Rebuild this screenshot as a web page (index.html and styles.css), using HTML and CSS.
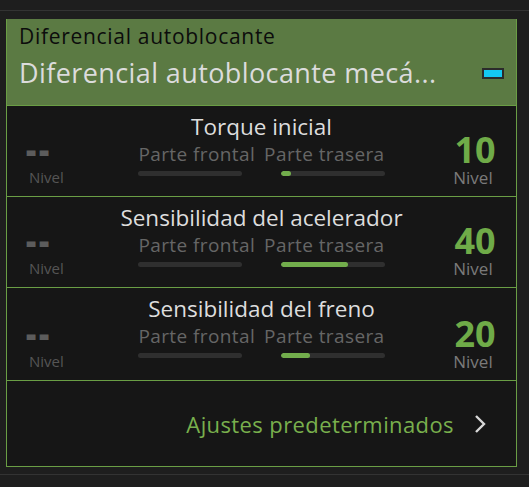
FILE: index.html
```html
<!DOCTYPE html>
<html lang="es">
<head>
<meta charset="utf-8">
<link rel="stylesheet" href="styles.css">
</head>
<body>
<div class="screen">
  <div class="topbar"></div>
  <div class="panel">
    <div class="header">
      <div class="h-small">Diferencial autoblocante</div>
      <div class="h-big">
        <span class="h-title">Diferencial autoblocante mecá...</span>
        <span class="indicator"></span>
      </div>
    </div>

    <div class="row">
      <div class="side left">
        <div class="dash">--</div>
        <div class="lvl-s">Nivel</div>
      </div>
      <div class="center">
        <div class="title">Torque inicial</div>
        <div class="parts">
          <div class="part">
            <div class="plabel">Parte frontal</div>
            <div class="bar"></div>
          </div>
          <div class="part">
            <div class="plabel">Parte trasera</div>
            <div class="bar"><div class="fill" style="width:10%"></div></div>
          </div>
        </div>
      </div>
      <div class="side right">
        <div class="num">10</div>
        <div class="lvl">Nivel</div>
      </div>
    </div>

    <div class="row">
      <div class="side left">
        <div class="dash">--</div>
        <div class="lvl-s">Nivel</div>
      </div>
      <div class="center">
        <div class="title">Sensibilidad del acelerador</div>
        <div class="parts">
          <div class="part">
            <div class="plabel">Parte frontal</div>
            <div class="bar"></div>
          </div>
          <div class="part">
            <div class="plabel">Parte trasera</div>
            <div class="bar"><div class="fill" style="width:65%"></div></div>
          </div>
        </div>
      </div>
      <div class="side right">
        <div class="num">40</div>
        <div class="lvl">Nivel</div>
      </div>
    </div>

    <div class="row">
      <div class="side left">
        <div class="dash">--</div>
        <div class="lvl-s">Nivel</div>
      </div>
      <div class="center">
        <div class="title">Sensibilidad del freno</div>
        <div class="parts">
          <div class="part">
            <div class="plabel">Parte frontal</div>
            <div class="bar"></div>
          </div>
          <div class="part">
            <div class="plabel">Parte trasera</div>
            <div class="bar"><div class="fill" style="width:28%"></div></div>
          </div>
        </div>
      </div>
      <div class="side right">
        <div class="num">20</div>
        <div class="lvl">Nivel</div>
      </div>
    </div>

    <div class="footer">
      <span class="defaults">Ajustes predeterminados</span>
      <svg class="chev" width="12" height="20" viewBox="0 0 12 20"><path d="M2 2 L10 10 L2 18" fill="none" stroke="#d8d8d8" stroke-width="2.4"/></svg>
    </div>
  </div>
  <div class="bottombar"></div>
</div>
</body>
</html>
```

FILE: styles.css
```css
* { box-sizing: border-box; }
html, body { margin: 0; padding: 0; }
body {
  width: 529px;
  height: 487px;
  background: #1d1d1d;
  font-family: "Open Sans", "Noto Sans", sans-serif;
  overflow: hidden;
}
.screen {
  width: 529px;
  height: 487px;
  background: #1e1e1e;
  padding-top: 10px;
}
.topbar {
  height: 1px;
  background: #333;
  margin-bottom: 8px;
}
.panel {
  margin-left: 6px;
  width: 511px;
  background: #161616;
  border: 1px solid #6a9e45;
  border-top: none;
}
.header {
  background: #5b7a43;
  height: 86px;
  padding: 3px 0 0 12px;
}
.h-small {
  color: #0c0c0c;
  font-size: 21px;
  letter-spacing: 0.7px;
  line-height: 28px;
}
.h-big {
  display: flex;
  align-items: center;
  justify-content: space-between;
  padding-right: 12px;
  margin-top: 3px;
}
.h-title {
  color: #dcdcdc;
  font-size: 27px;
  font-weight: 500;
  letter-spacing: 0.4px;
  line-height: 40px;
}
.indicator {
  width: 22px;
  height: 11px;
  background: #14c8f2;
  border: 2px solid #2b2b2b;
}
.row {
  display: grid;
  grid-template-columns: 1fr auto 1fr;
  height: 91px;
  border-top: 1px solid #6a9e45;
}
.row:nth-of-type(4) { height: 93px; }
.side {
  display: flex;
  flex-direction: column;
  justify-content: flex-end;
}
.left {
  padding: 0 0 12px 19px;
}
.dash {
  color: #5c5c5c;
  font-size: 22px;
  font-weight: 800;
  line-height: 20px;
  letter-spacing: 2px;
  margin-bottom: 11px;
  transform: scale(1.45, 1.6);
  transform-origin: left center;
}
.lvl-s {
  color: #555;
  font-size: 15px;
  line-height: 14px;
  padding-left: 3px;
}
.right {
  align-items: flex-end;
  padding: 0 20px 9px 0;
}
.right > * { text-align: center; }
.num {
  color: #6fab48;
  font-size: 36px;
  font-weight: 700;
  line-height: 38px;
  width: 46px;
  margin-right: -2px;
}
.lvl {
  color: #7a7a7a;
  font-size: 17px;
  line-height: 18px;
  width: 46px;
}
.center {
  display: flex;
  flex-direction: column;
  align-items: center;
  padding-top: 5px;
}
.title {
  color: #dddddd;
  font-size: 22.5px;
  line-height: 31px;
}
.parts {
  display: flex;
  gap: 9px;
}
.part {
  display: flex;
  flex-direction: column;
  align-items: center;
}
.plabel {
  color: #666;
  font-size: 19px;
  letter-spacing: 0.4px;
  line-height: 24px;
}
.bar {
  margin-top: 5px;
  width: 104px;
  height: 5px;
  border-radius: 3px;
  background: #2f2f2f;
  overflow: hidden;
}
.part:first-child .bar { align-self: flex-start; }
.part:last-child .bar { align-self: flex-end; }
.fill {
  height: 100%;
  background: #72ad4c;
  border-radius: 3px;
}
.footer {
  border-top: 1px solid #6a9e45;
  height: 86px;
  display: flex;
  align-items: center;
  justify-content: flex-end;
  padding-right: 30px;
  gap: 20px;
}
.defaults {
  color: #79b04d;
  font-size: 22px;
  letter-spacing: 0.4px;
}
.chev { display: block; }
.bottombar {
  height: 1px;
  background: #333;
  margin-top: 7px;
}
```
